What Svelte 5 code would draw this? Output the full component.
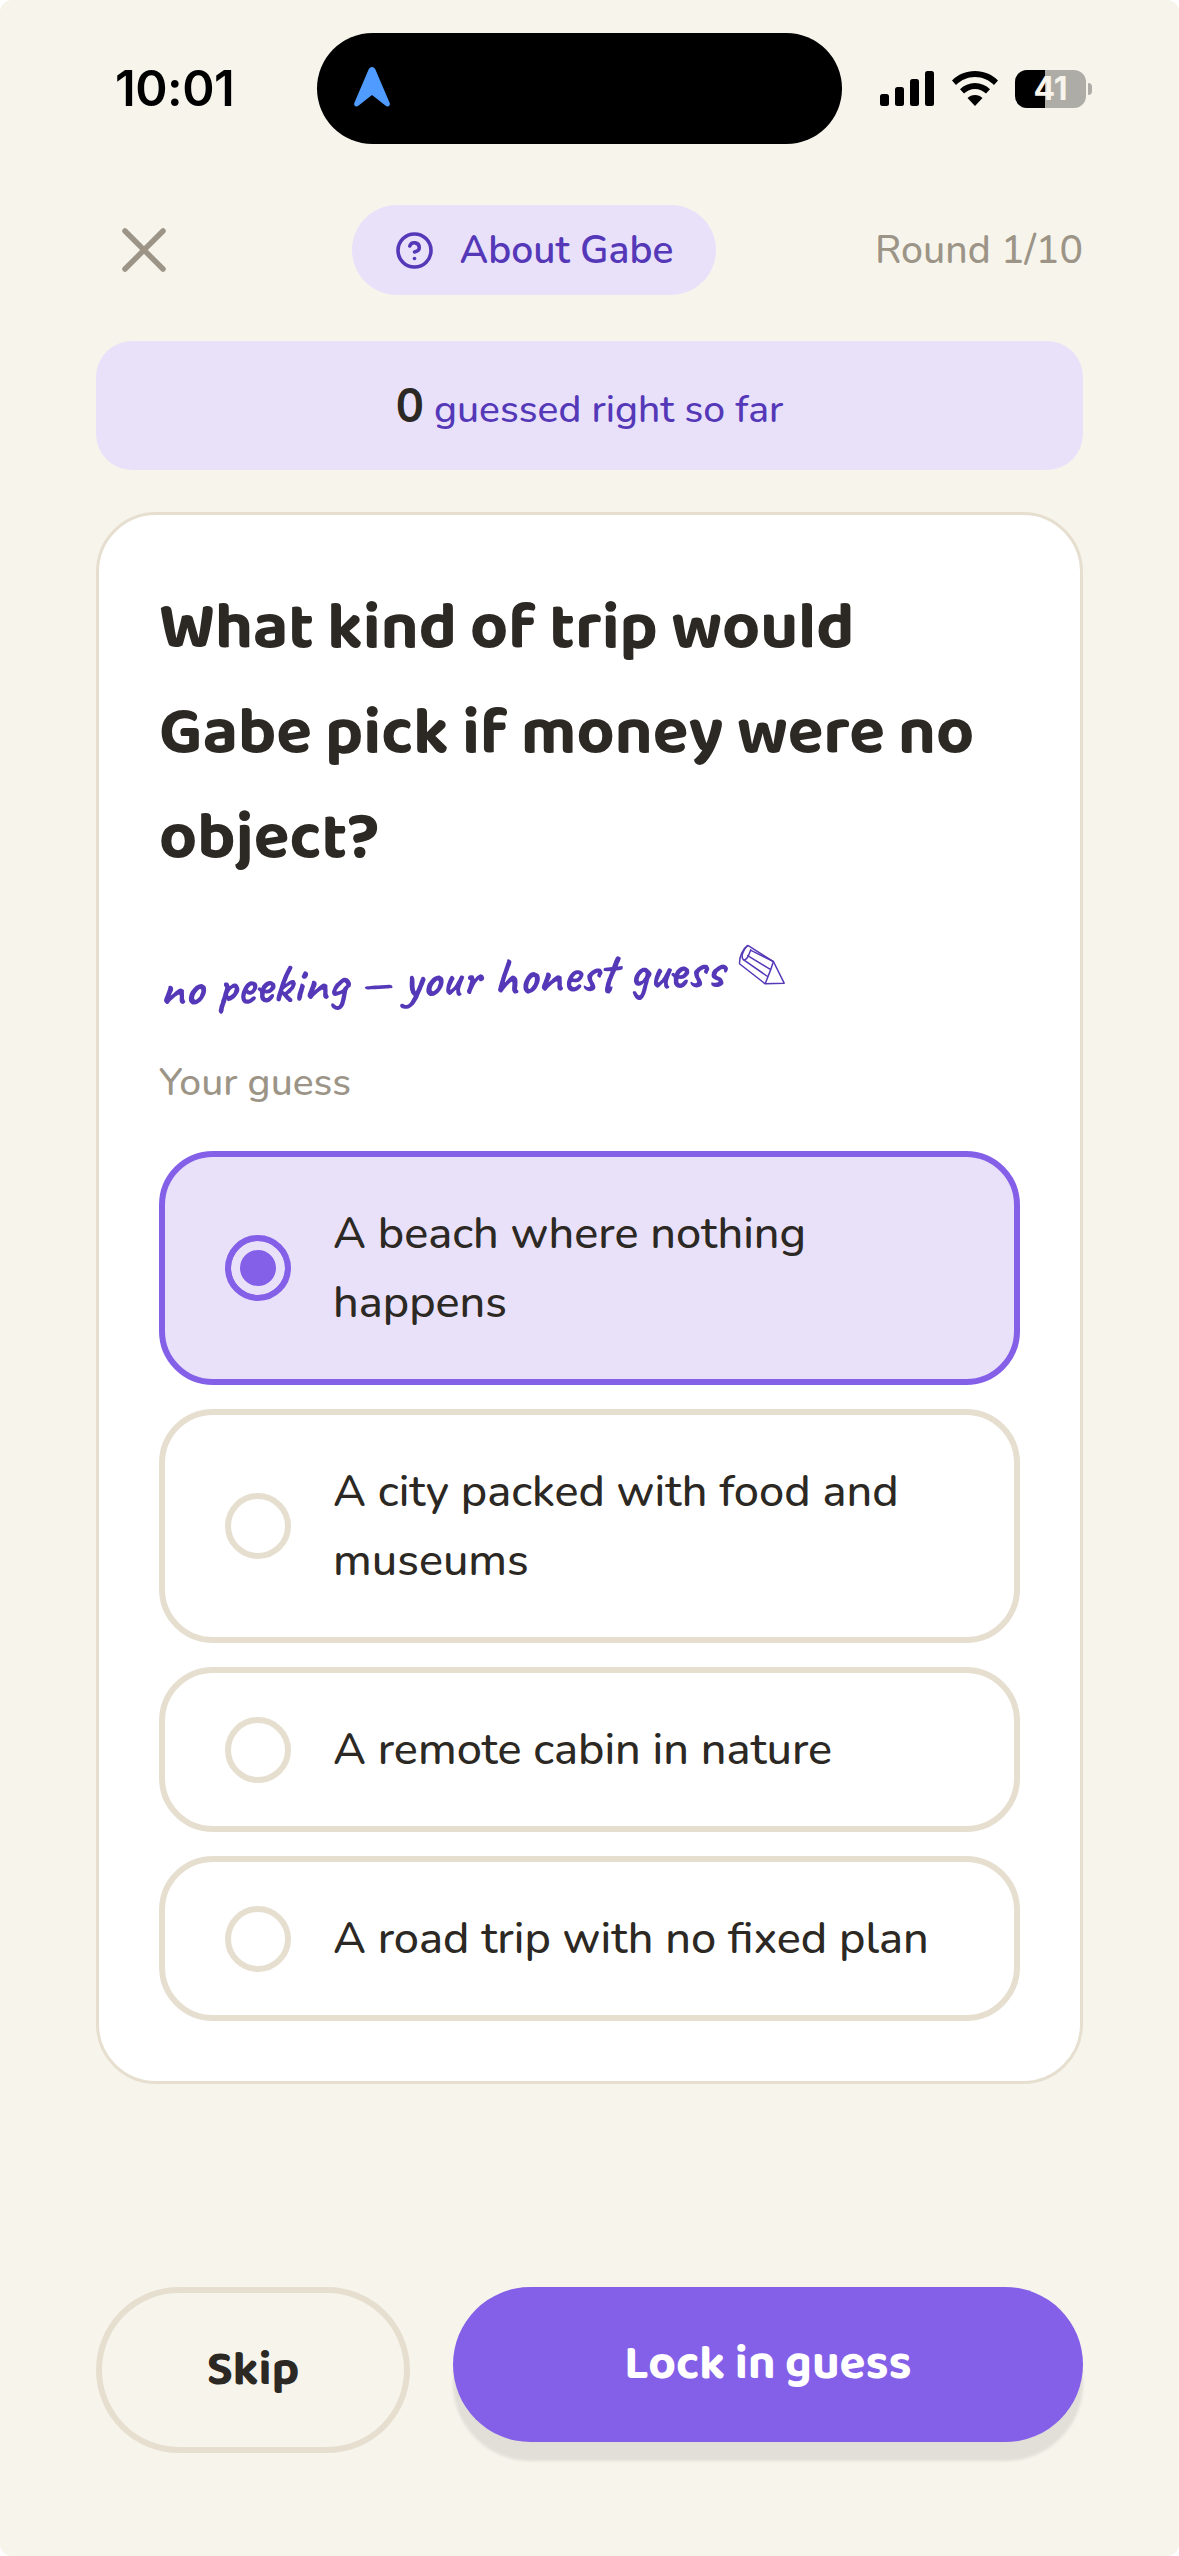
<script lang="ts">
  let selected = $state(0);

  const options = [
    "A beach where nothing happens",
    "A city packed with food and museums",
    "A remote cabin in nature",
    "A road trip with no fixed plan",
  ];
</script>

<div class="page">
  <div class="status">
    <span class="time">10:01</span>
    <div class="island">
      <svg class="arrow" width="38" height="42" viewBox="0 0 38 42">
        <path d="M19 1c1.600 0 2.700 1 3.400 2.500l14.300 33.500c1 2.400-1.500 4.400-3.700 3L19 29 5 40c-2.200 1.400-4.700-.6-3.700-3L15.600 3.500C16.300 2 17.400 1 19 1z" fill="#4f9bff" />
      </svg>
    </div>
    <div class="indicators">
      <svg width="56" height="36" viewBox="0 0 56 36">
        <rect x="1" y="23" width="9" height="12" rx="2.500" />
        <rect x="16" y="16" width="9" height="19" rx="2.500" />
        <rect x="31" y="8" width="9" height="27" rx="2.500" />
        <rect x="46" y="0" width="9" height="35" rx="2.500" />
      </svg>
      <svg width="48" height="36" viewBox="0 0 48 36">
        <path d="M24 0c9 0 17 3.500 23 9.500l-4 4.500C38 9 31.500 6 24 6S10 9 5 14L1 9.500C7 3.500 15 0 24 0z" />
        <path d="M24 12c5.800 0 11 2.300 15 6.200l-4 4.400c-3-2.800-6.800-4.600-11-4.600s-8 1.800-11 4.600l-4-4.400C13 14.300 18.200 12 24 12z" />
        <path d="M24 24c2.900 0 5.500 1.100 7.500 2.900L24 35l-7.500-8.100c2-1.800 4.600-2.900 7.500-2.900z" />
      </svg>
      <div class="battery">
        <div class="battery-body">
          <span class="battery-fill"></span>
          <span class="battery-num">41</span>
        </div>
        <span class="battery-cap"></span>
      </div>
    </div>
  </div>

  <div class="topbar">
    <button class="close" aria-label="Close">
      <svg width="48" height="48" viewBox="0 0 48 48">
        <path d="M5 5l38 38M43 5L5 43" stroke="#9c9587" stroke-width="5.500" stroke-linecap="round" fill="none" />
      </svg>
    </button>
    <button class="about">
      <svg width="39" height="39" viewBox="0 0 39 39" fill="none" stroke="#5438b8" stroke-width="3.600" stroke-linecap="round" stroke-linejoin="round">
        <circle cx="19.500" cy="19.500" r="16.500" />
        <path d="M14.800 15a4.900 4.900 0 0 1 9.500 1.600c0 3.300-4.800 4.300-4.800 4.300" />
        <path d="M19.500 27.500h.02" />
      </svg>
      <span>About Gabe</span>
    </button>
    <span class="round">Round 1/10</span>
  </div>

  <div class="banner"><b>0</b> guessed right so far</div>

  <div class="card">
    <h1>What kind of trip would Gabe pick if money were no object?</h1>
    <p class="note">
      no peeking — your honest guess
      <svg class="pencil" width="46" height="42" viewBox="0 0 46 42" fill="none" stroke="#5438b8" stroke-width="1.500" stroke-linejoin="round">
        <path d="M10 1 35 18 45 40 26 40 1 19C1 12 5 4 10 1z" />
        <path d="M10 1C6 4 2 12 5 15c3 2 6-5 8-10" />
        <path d="M5 15 29 33 26 40M13 6 35 18M9 11 32 26 29 33M32 26 35 18" />
      </svg>
    </p>
    <p class="label">Your guess</p>
    <div class="options">
      {#each options as option, i}
        <button class="option" class:active={selected === i} onclick={() => (selected = i)}>
          <span class="radio"></span>
          <span class="option-text">{option}</span>
        </button>
      {/each}
    </div>
  </div>

  <div class="actions">
    <button class="skip">Skip</button>
    <button class="lock">Lock in guess</button>
  </div>
</div>

<style>
  :global(body) {
    margin: 0;
    background: #fff;
  }
  button {
    font-family: inherit;
    border: none;
    background: none;
    padding: 0;
  }
  .page {
    height: 2556px;
    box-sizing: border-box;
    padding: 0 96px;
    display: flex;
    flex-direction: column;
    border-radius: 12px;
    background: #f7f4ec;
    color: #2c2823;
    font-family: "Nunito", "Noto Sans", sans-serif;
    overflow: hidden;
  }
  .status {
    height: 111px;
    margin: 33px -24px 0 19px;
    display: flex;
    align-items: center;
  }
  .time {
    width: 202px;
    font-family: Inter, sans-serif;
    font-size: 49px;
    font-weight: 600;
    color: #000;
    letter-spacing: -0.5px;
  }
  .island {
    flex: none;
    width: 525px;
    height: 111px;
    border-radius: 56px;
    background: #000;
    display: flex;
    align-items: center;
    padding-left: 36px;
    box-sizing: border-box;
  }
  .arrow {
    margin-top: -4px;
  }
  .indicators {
    margin-left: 37px;
    display: flex;
    align-items: center;
    gap: 16px;
  }
  .battery {
    display: flex;
    align-items: center;
    gap: 2px;
  }
  .battery-body {
    position: relative;
    width: 71px;
    height: 38px;
    border-radius: 12px;
    background: #aeaca6;
    overflow: hidden;
  }
  .battery-fill {
    position: absolute;
    left: 0;
    top: 0;
    bottom: 0;
    width: 30px;
    background: #000;
  }
  .battery-num {
    position: absolute;
    inset: 0;
    text-align: center;
    font-family: Inter, sans-serif;
    font-size: 32px;
    font-weight: 700;
    line-height: 38px;
    color: #f7f4ec;
  }
  .battery-cap {
    width: 4px;
    height: 12px;
    background: #aeaca6;
    border-radius: 0 6px 6px 0;
  }
  .topbar {
    margin-top: 61px;
    height: 90px;
    display: flex;
    align-items: center;
    justify-content: space-between;
  }
  .close {
    margin-left: 24px;
    display: flex;
  }
  .about {
    display: flex;
    align-items: center;
    gap: 26px;
    height: 90px;
    margin-left: 24px;
    padding: 0 42px 0 43px;
    border-radius: 45px;
    background: #e9e1f9;
    color: #5438b8;
    font-size: 39px;
    font-weight: 600;
  }
  .round {
    font-size: 39.250px;
    font-weight: 500;
    color: #9c9587;
  }
  .banner {
    margin-top: 46px;
    height: 129px;
    box-sizing: border-box;
    padding-top: 1px;
    border-radius: 36px;
    background: #e9e1f9;
    text-align: center;
    color: #5438b8;
    font-size: 39px;
    font-weight: 500;
    line-height: 129px;
  }
  .banner b {
    color: #2c2823;
    font-size: 47px;
    font-weight: 700;
  }
  .card {
    margin-top: 42px;
    height: 1572px;
    box-sizing: border-box;
    padding: 62px 60px 0;
    background: #fff;
    border: 3px solid #e6dfd0;
    border-radius: 60px;
  }
  h1 {
    margin: 0;
    font-family: "Baloo 2", "Noto Sans", sans-serif;
    font-size: 66px;
    font-weight: 700;
    line-height: 105px;
    color: #2c2823;
  }
  .note {
    margin: 67px 0 0;
    font-family: "Caveat", "Lato", sans-serif;
    font-size: 53.600px;
    font-weight: 600;
    line-height: 60px;
    color: #5438b8;
    transform: rotate(-2deg);
    transform-origin: left center;
    white-space: nowrap;
  }
  .pencil {
    vertical-align: -1px;
    margin-left: 2px;
  }
  .label {
    margin: 37px 0 0;
    font-size: 39px;
    font-weight: 500;
    line-height: 54px;
    color: #9c9587;
  }
  .options {
    margin-top: 41px;
    display: flex;
    flex-direction: column;
    gap: 24px;
  }
  .option {
    display: flex;
    align-items: center;
    gap: 42px;
    box-sizing: border-box;
    width: 100%;
    padding: 42px 60px;
    border: 6px solid #e6dfd0;
    border-radius: 54px;
    background: #fff;
    color: #2c2823;
    text-align: left;
    font-size: 45px;
    font-weight: 500;
    line-height: 69px;
  }
  .option-text {
    flex: 1;
  }
  .radio {
    flex: none;
    width: 66px;
    height: 66px;
    box-sizing: border-box;
    border: 6px solid #e6dfd0;
    border-radius: 50%;
    background: #fff;
  }
  .option.active {
    border-color: #8460e8;
    background: #e9e1f9;
  }
  .option.active .radio {
    border-color: #8460e8;
    background: #8460e8;
    box-shadow: inset 0 0 0 9px #e9e1f9;
  }
  .actions {
    margin-top: 203px;
    display: flex;
    align-items: flex-start;
    gap: 43px;
  }
  .skip {
    width: 314px;
    height: 166px;
    box-sizing: border-box;
    border: 6px solid #e6dfd0;
    border-radius: 83px;
    font-family: "Baloo 2", "Noto Sans", sans-serif;
    font-size: 48px;
    font-weight: 700;
    color: #2c2823;
  }
  .lock {
    flex: 1;
    height: 155px;
    border-radius: 78px;
    background: #8460e8;
    box-shadow: 0 19px 3px rgba(44, 40, 35, 0.1);
    font-family: "Baloo 2", "Noto Sans", sans-serif;
    font-size: 48px;
    font-weight: 700;
    color: #fff;
  }
</style>
